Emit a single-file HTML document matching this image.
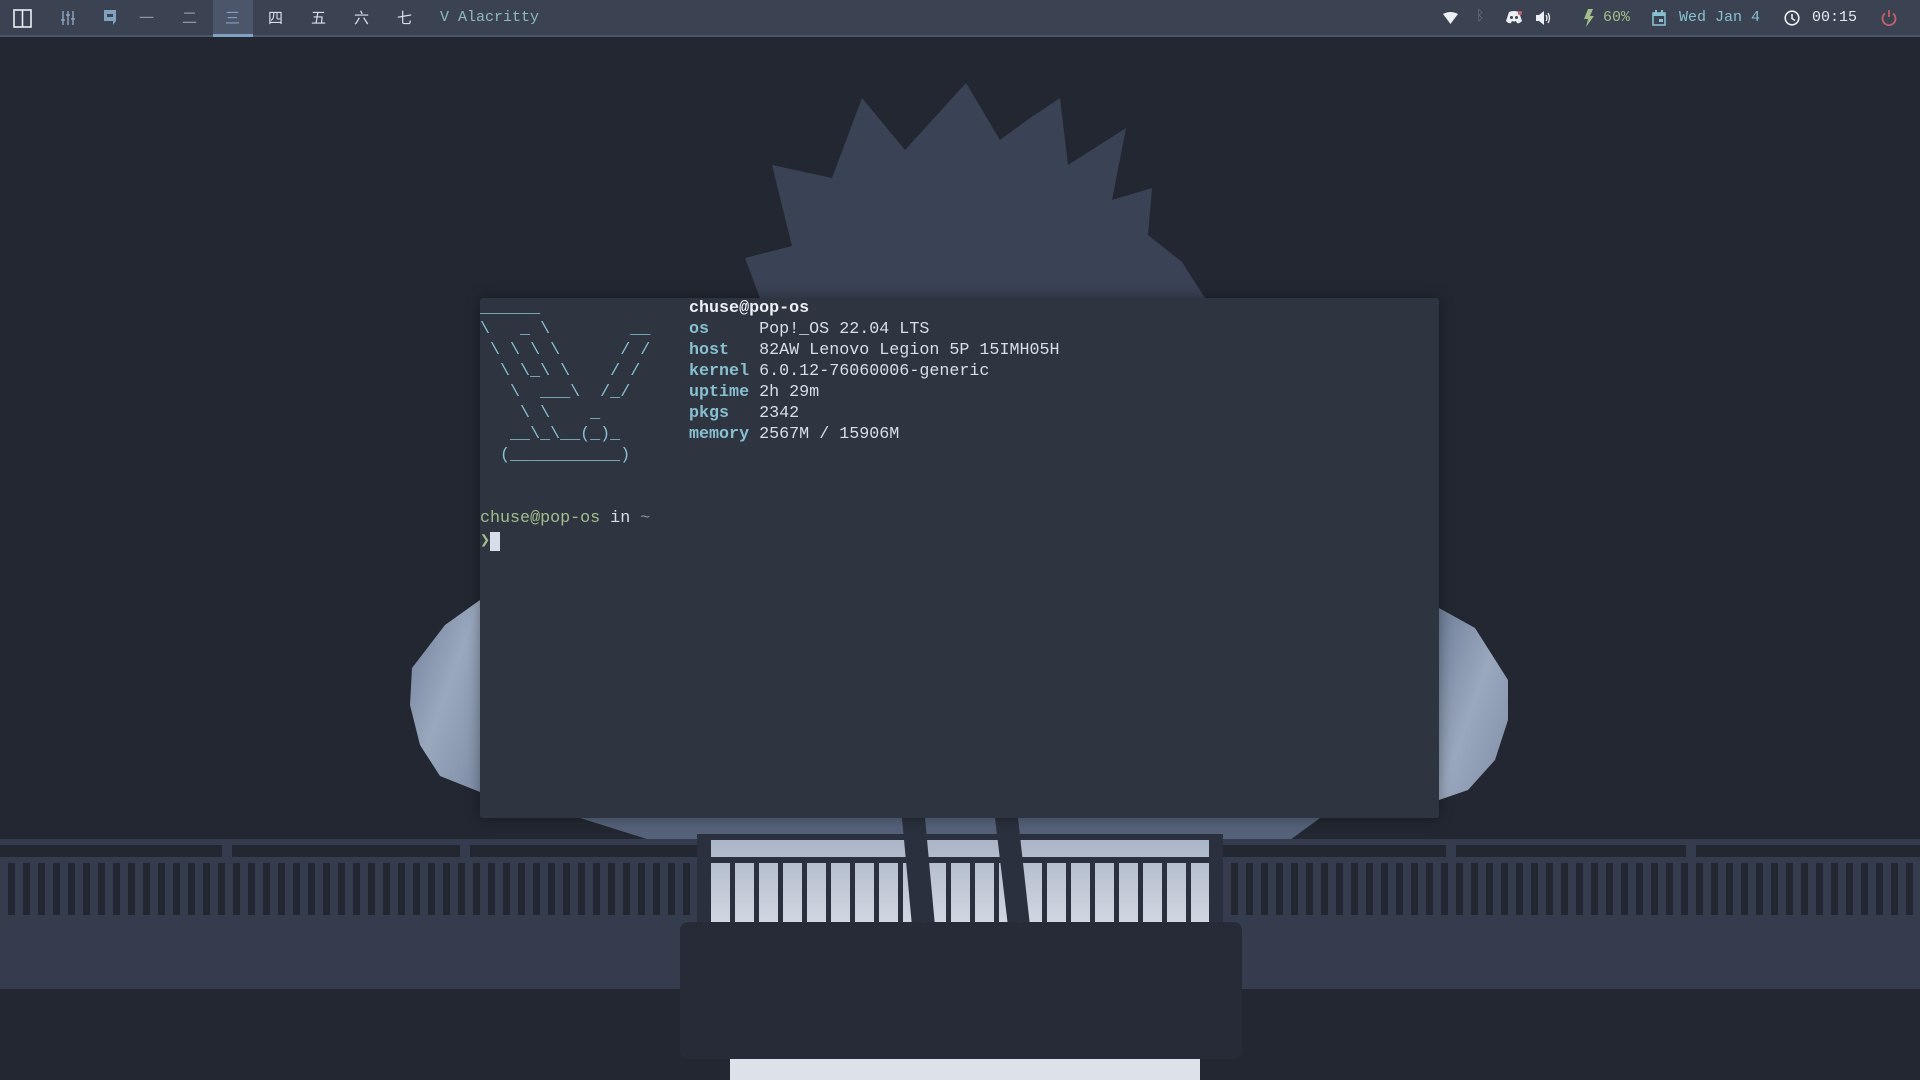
<!DOCTYPE html>
<html><head><meta charset="utf-8"><style>
*{margin:0;padding:0;box-sizing:border-box}
body{width:1920px;height:1080px;background:#222731;position:relative;overflow:hidden;font-family:"Liberation Mono",monospace}
.abs{position:absolute}
#bar{left:0;top:0;width:1920px;height:37px;background:#3b4252;border-bottom:2px solid #4c566a}
.bi{position:absolute;top:0;height:35px;line-height:35px;font-size:15px;color:#d8dee9}
#term{left:480px;top:298px;width:959px;height:520px;background:#2e3440;border-radius:3px;box-shadow:0 0 14px rgba(0,0,0,.35)}
pre{position:absolute;font-family:"Liberation Mono",monospace;font-size:16.7px;line-height:21px;color:#d8dee9;white-space:pre}
.c{color:#88c0d0;font-weight:bold}
.a{color:#88c0d0}
.g{color:#a3be8c}
.w{color:#eceff4;font-weight:bold}
</style></head><body>
<svg class="abs" style="left:0;top:0" width="1920" height="1080">
<defs>
<linearGradient id="sky" x1="0" y1="0" x2="0" y2="1"><stop offset="0" stop-color="#a7b2c4"/><stop offset="1" stop-color="#d3d9e3"/></linearGradient>
<linearGradient id="blob" x1="0" y1="0" x2="1" y2="1"><stop offset="0" stop-color="#6f7f99"/><stop offset="0.5" stop-color="#9aa8be"/><stop offset="1" stop-color="#7e8da6"/></linearGradient>
</defs>
<polygon fill="#3a4255" points="760,298 745,258 792,246 772,165 832,178 862,98 905,150 966,83 1000,140 1030,118 1060,98 1068,165 1126,128 1112,200 1152,188 1148,235 1182,262 1205,298"/>
<polygon fill="url(#blob)" points="480,600 445,625 412,668 410,705 420,745 440,776 480,792"/>
<polygon fill="url(#blob)" points="1439,608 1475,628 1508,680 1508,720 1495,760 1468,790 1439,800"/>
<polygon fill="#55627a" points="580,818 1320,818 1290,840 650,840"/>
<rect x="0" y="839" width="1920" height="6" fill="#353c4e"/>
<rect x="0" y="857" width="1920" height="6" fill="#353c4e"/>
<rect x="222" y="839" width="10" height="76" fill="#353c4e"/>
<rect x="460" y="839" width="10" height="76" fill="#353c4e"/>
<rect x="1446" y="839" width="10" height="76" fill="#353c4e"/>
<rect x="1686" y="839" width="10" height="76" fill="#353c4e"/>
<rect x="0" y="915" width="1920" height="74" fill="#353c4e"/>
<rect x="697" y="834" width="526" height="92" fill="url(#sky)"/>
<rect x="697" y="834" width="526" height="6" fill="#2a303d"/>
<rect x="697" y="857" width="526" height="6" fill="#2a303d"/>
<rect x="697" y="834" width="14" height="92" fill="#2a303d"/>
<rect x="1209" y="834" width="14" height="92" fill="#2a303d"/>
<polygon points="902,818 925,818 935,926 912,926" fill="#2a303d"/>
<polygon points="995,818 1018,818 1030,926 1008,926" fill="#2a303d"/>
<rect x="680" y="922" width="562" height="137" rx="8" fill="#262b37"/>
<rect x="730" y="1059" width="470" height="21" fill="#dde1e9"/>
</svg>
<div class="abs" style="left:711px;top:863px;width:498px;height:60px;background:repeating-linear-gradient(90deg,transparent 0 19px,#2a303d 19px 24px)"></div>
<div class="abs" style="left:0;top:863px;width:697px;height:52px;background:repeating-linear-gradient(90deg,#353c4e 0 8px,#222731 8px 15px)"></div>
<div class="abs" style="left:1223px;top:863px;width:697px;height:52px;background:repeating-linear-gradient(90deg,#353c4e 0 8px,#222731 8px 15px)"></div>

<div id="bar" class="abs">
 <div class="abs" style="left:213px;top:0;width:40px;height:37px;background:#4c566a"></div>
 <div class="abs" style="left:213px;top:34px;width:40px;height:3px;background:#81a1c1"></div>
</div>
<svg class="abs" style="left:13px;top:9px" width="19" height="19"><rect x="1" y="1" width="17" height="17" fill="none" stroke="#eceff4" stroke-width="1.6"/><line x1="9.5" y1="1" x2="9.5" y2="18" stroke="#eceff4" stroke-width="1.6"/></svg>
<svg class="abs" style="left:61px;top:11px" width="14" height="14"><g stroke="#8fa7c2" stroke-width="1.4"><line x1="2" y1="0" x2="2" y2="14"/><line x1="7" y1="0" x2="7" y2="14"/><line x1="12" y1="0" x2="12" y2="14"/><line x1="0" y1="9" x2="4" y2="9"/><line x1="5" y1="4" x2="9" y2="4"/><line x1="10" y1="8" x2="14" y2="8"/></g></svg>
<svg class="abs" style="left:104px;top:10px" width="12" height="15"><path d="M0 0H12V11L9 15V11H0Z" fill="#81a1c1"/><rect x="3" y="4" width="6" height="3" fill="#3b4252"/></svg>
<div class="bi" style="left:139px;color:#8b96a8;font-family:'Noto Sans CJK SC',sans-serif">一</div>
<div class="bi" style="left:182px;color:#8b96a8;font-family:'Noto Sans CJK SC',sans-serif">二</div>
<div class="bi" style="left:225px;color:#81a1c1;font-family:'Noto Sans CJK SC',sans-serif">三</div>
<div class="bi" style="left:268px;font-family:'Noto Sans CJK SC',sans-serif">四</div>
<div class="bi" style="left:311px;font-family:'Noto Sans CJK SC',sans-serif">五</div>
<div class="bi" style="left:354px;font-family:'Noto Sans CJK SC',sans-serif">六</div>
<div class="bi" style="left:397px;font-family:'Noto Sans CJK SC',sans-serif">七</div>
<div class="bi" style="left:440px;color:#8fbcbb">V Alacritty</div>

<svg class="abs" style="left:1443px;top:12px" width="15" height="12"><path d="M0 2Q7.5 -2 15 2L7.5 12Z" fill="#eceff4"/></svg>
<div class="bi" style="left:1476px;color:#6b7588;font-size:14px">ᛒ</div>
<svg class="abs" style="left:1506px;top:11px" width="16" height="13"><path d="M3 1Q8 -1 13 1L16 10Q13 13 11 12L10 10Q8 11 6 10L5 12Q3 13 0 10Z" fill="#eceff4"/><circle cx="5.5" cy="6.5" r="1.5" fill="#3b4252"/><circle cx="10.5" cy="6.5" r="1.5" fill="#3b4252"/><circle cx="14" cy="2" r="2.2" fill="#bf616a"/></svg>
<svg class="abs" style="left:1536px;top:11px" width="15" height="14"><path d="M0 4H3L8 0V14L3 10H0Z" fill="#eceff4"/><path d="M10 4Q12 7 10 10M12 2Q15 7 12 12" stroke="#eceff4" stroke-width="1.3" fill="none"/></svg>
<svg class="abs" style="left:1583px;top:9px" width="11" height="18"><path d="M5 0H10L7 7H11L3 18L5 10H1Z" fill="#a3be8c"/></svg>
<div class="bi" style="left:1603px;color:#a3be8c">60%</div>
<svg class="abs" style="left:1652px;top:10px" width="14" height="16"><rect x="1" y="3" width="12" height="12" fill="none" stroke="#88c0d0" stroke-width="1.6"/><rect x="1" y="3" width="12" height="3" fill="#88c0d0"/><rect x="3" y="0" width="2" height="4" fill="#88c0d0"/><rect x="9" y="0" width="2" height="4" fill="#88c0d0"/><rect x="7" y="9" width="4" height="3" fill="#88c0d0"/></svg>
<div class="bi" style="left:1679px;color:#88c0d0">Wed Jan 4</div>
<svg class="abs" style="left:1784px;top:10px" width="16" height="16"><circle cx="8" cy="8" r="6.8" fill="none" stroke="#eceff4" stroke-width="1.6"/><path d="M8 4V8.5L11 10.5" fill="none" stroke="#eceff4" stroke-width="1.6"/></svg>
<div class="bi" style="left:1812px;color:#e5e9f0">00:15</div>
<svg class="abs" style="left:1881px;top:9px" width="16" height="17"><path d="M4 4.5A6.5 6.5 0 1 0 12 4.5" fill="none" stroke="#bf616a" stroke-width="1.8"/><line x1="8" y1="1" x2="8" y2="8" stroke="#bf616a" stroke-width="1.8"/></svg>

<div id="term" class="abs">
<pre style="left:0;top:0"><span class="a">______
\   _ \        __
 \ \ \ \      / /
  \ \_\ \    / /
   \  ___\  /_/
    \ \    _
   __\_\__(_)_
  (___________)</span>


<span class="g">chuse@pop-os</span> in <span style="color:#8e96a5">~</span>
<span class="g" style="font-weight:bold;font-family:'DejaVu Sans Mono',monospace">❯</span><span style="background:#d8dee9"> </span></pre>
<pre style="left:209px;top:0"><span class="w">chuse@pop-os</span>
<span class="c">os</span>     Pop!_OS 22.04 LTS
<span class="c">host</span>   82AW Lenovo Legion 5P 15IMH05H
<span class="c">kernel</span> 6.0.12-76060006-generic
<span class="c">uptime</span> 2h 29m
<span class="c">pkgs</span>   2342
<span class="c">memory</span> 2567M / 15906M</pre>
</div>
</body></html>
